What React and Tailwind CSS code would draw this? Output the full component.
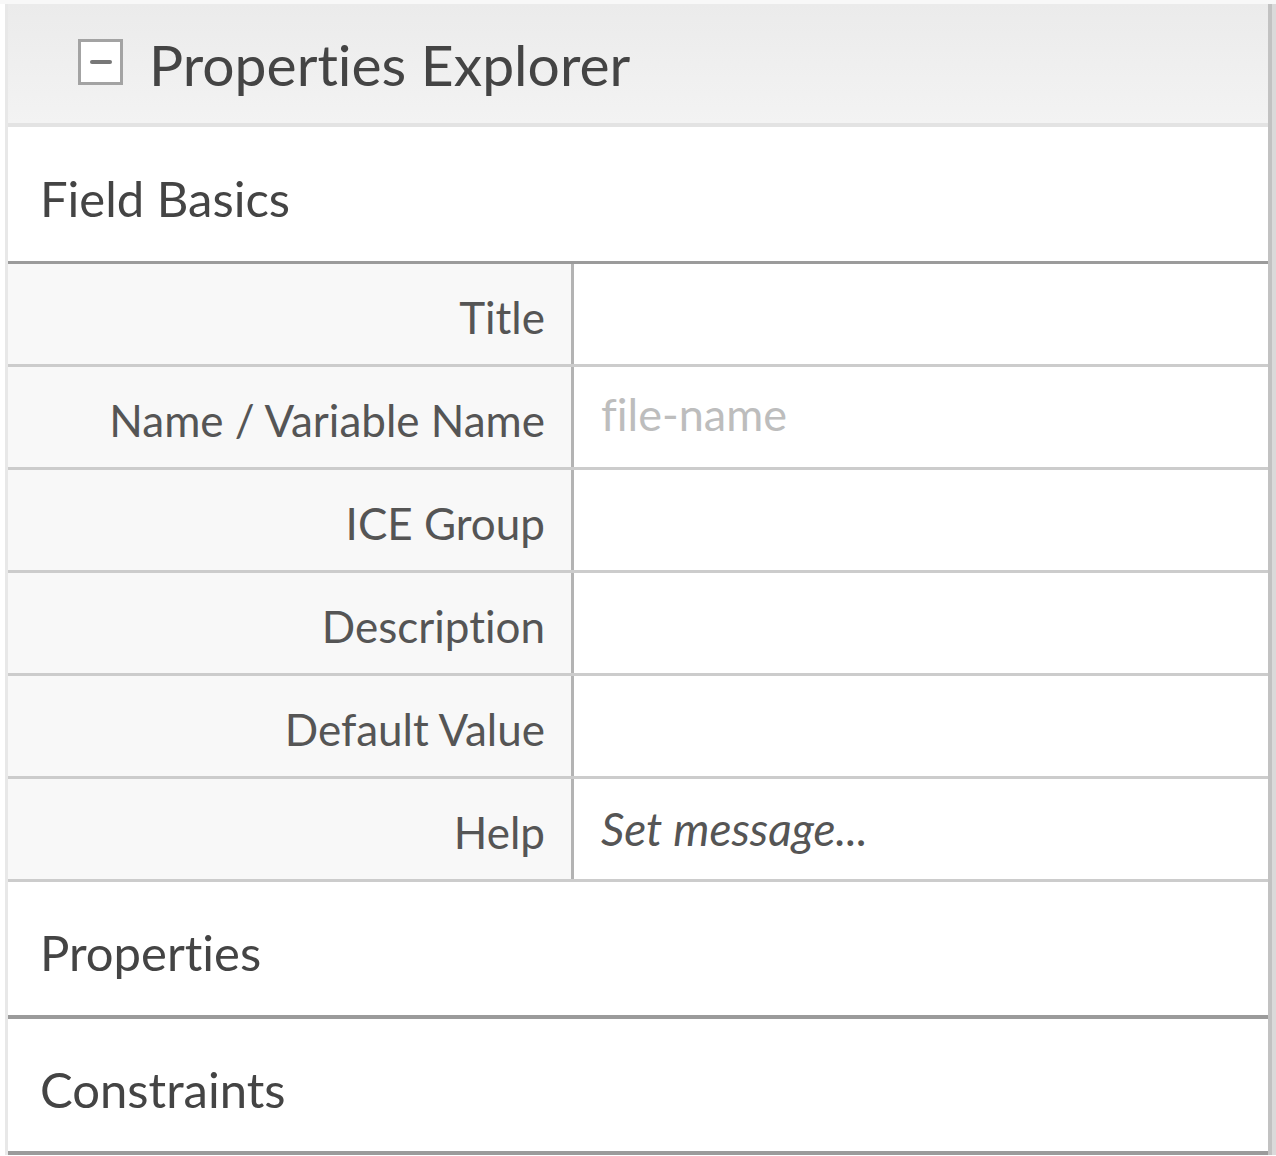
import { useState } from "react"

const rows = [
    { label: "Title", value: "" },
    { label: "Name / Variable Name", value: "", placeholder: "file-name" },
    { label: "ICE Group", value: "" },
    { label: "Description", value: "" },
    { label: "Default Value", value: "" },
    { label: "Help", value: "", hint: "Set message..." },
]

export default function App() {
    const [values, setValues] = useState(rows.map(r => r.value))

    return (
        <div className="w-[1276px] h-[1156px] bg-white font-['Lato',sans-serif] [font-variant-ligatures:none] overflow-hidden">
            <div className="h-[4px] bg-[#f8f8f8]" />
            <div className="flex pl-[5px]">
                <div className="flex-1 flex flex-col border-l-[3px] border-[#e8e8e8]">
                    {/* Header */}
                    <div className="h-[123px] flex items-center pl-[70px] bg-gradient-to-b from-[#ebebeb] to-[#f3f3f3] border-b-[4px] border-[#e3e3e3]">
                        <button className="w-[45px] h-[46px] -mt-[4px] border-[3px] border-[#a3a3a3] bg-white flex items-center justify-center">
                            <span className="block w-[22px] h-[4px] bg-[#777] rounded-sm" />
                        </button>
                        <h1 className="ml-[26px] text-[57px] text-[#444] leading-none pt-[2px]">Properties Explorer</h1>
                    </div>

                    {/* Field Basics */}
                    <div className="h-[137px] flex items-center pl-[32px] pt-[8px] bg-white border-b-[3px] border-[#9b9b9b]">
                        <h2 className="text-[49px] text-[#444] leading-none">Field Basics</h2>
                    </div>

                    <div className="flex flex-col">
                        {rows.map((row, i) => (
                            <div key={row.label} className="h-[103px] flex border-b-[3px] border-[#cccccc]">
                                <div className="w-[566px] shrink-0 bg-[#f8f8f8] flex items-center justify-end pr-[26px] border-r-[3px] border-[#b3b3b3]">
                                    <span className="text-[44px] text-[#555] leading-none pt-[6px]">{row.label}</span>
                                </div>
                                <div className="flex-1 bg-white flex items-center pl-[27px]">
                                    {row.hint ? (
                                        <span className="text-[46px] italic text-[#555] leading-none">{row.hint}</span>
                                    ) : (
                                        <input
                                            value={values[i]}
                                            placeholder={row.placeholder || ""}
                                            onChange={e => setValues(values.map((v, j) => j === i ? e.target.value : v))}
                                            className="w-full bg-transparent outline-none text-[45px] text-[#555] placeholder:text-[#bdbdbd] leading-none pb-[6px] [font-variant-ligatures:none]"
                                        />
                                    )}
                                </div>
                            </div>
                        ))}
                    </div>

                    {/* Collapsed sections */}
                    <div className="h-[137px] flex items-center pl-[32px] pt-[8px] bg-white border-b-[4px] border-[#9b9b9b]">
                        <h2 className="text-[49px] text-[#444] leading-none">Properties</h2>
                    </div>
                    <div className="h-[136px] flex items-center pl-[32px] pt-[8px] bg-white border-b-[4px] border-[#9b9b9b]">
                        <h2 className="text-[49px] text-[#444] leading-none">Constraints</h2>
                    </div>
                </div>
                <div className="w-[4px] bg-[#c2c2c2]" />
                <div className="w-[4px] bg-[#dadada]" />
            </div>
        </div>
    )
}
